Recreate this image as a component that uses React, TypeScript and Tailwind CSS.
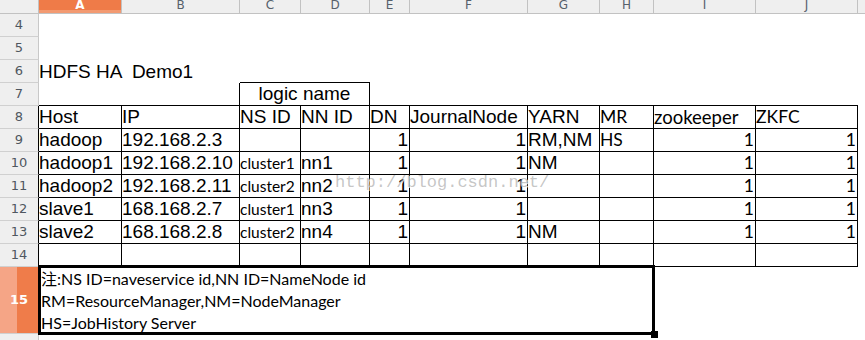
import React from "react";

const arial = "font-['Liberation_Sans',Arial,sans-serif]";
const cal = "font-['Lato','Noto_Sans_CJK_SC',sans-serif]";
const ui = "font-['DejaVu_Sans',sans-serif]";

type Col = { w: string; letter: string };

const columns: Col[] = [
  { w: "w-[83px]", letter: "A" },
  { w: "w-[118px]", letter: "B" },
  { w: "w-[61px]", letter: "C" },
  { w: "w-[69px]", letter: "D" },
  { w: "w-[40px]", letter: "E" },
  { w: "w-[118px]", letter: "F" },
  { w: "w-[72px]", letter: "G" },
  { w: "w-[54px]", letter: "H" },
  { w: "w-[102px]", letter: "I" },
  { w: "w-[102px]", letter: "J" },
];

function ColumnHeader() {
  return (
    <div className="flex h-[14px]">
      <div className="w-[39px] shrink-0 border-r border-b border-[#c2c2c2] bg-[#efefef]" />
      {columns.map((c) =>
        c.letter === "A" ? (
          <div
            key={c.letter}
            className={`${c.w} shrink-0 border-r border-b border-[#c2c2c2] bg-[linear-gradient(180deg,#ef7b48_0_10px,#f39a72_10px)] flex justify-center items-end`}
          >
            <span className={`${ui} text-[12px] leading-[12px] mb-[2px] text-white font-bold`}>A</span>
          </div>
        ) : (
          <div
            key={c.letter}
            className={`${c.w} shrink-0 border-r border-b border-[#c2c2c2] bg-[#efefef] flex justify-center items-end`}
          >
            <span className={`${ui} text-[12px] leading-[12px] mb-[2px] text-[#56606b]`}>{c.letter}</span>
          </div>
        )
      )}
      <div className="flex-1 border-b border-[#c2c2c2] bg-[#efefef]" />
    </div>
  );
}

function RowHead({ n, edge = "border-r-[#c8c8c8]", h = "h-[23px]" }: { n: number | string; edge?: string; h?: string }) {
  return (
    <div
      className={`w-[39px] ${h} shrink-0 border-r border-b border-b-[#d0d0d0] ${edge} bg-[#efefef] flex items-center justify-center`}
    >
      <span className={`${ui} text-[13px] text-[#4f5760]`}>{n}</span>
    </div>
  );
}

type CellSpec = { t?: string; right?: boolean; f?: "a" | "c" | "cs" | "cl" };

function Cell({ w, spec }: { w: string; spec: CellSpec }) {
  const font =
    spec.f === "c"
      ? `${cal} text-[17.5px]`
      : spec.f === "cl"
      ? `${cal} text-[18.5px]`
      : spec.f === "cs"
      ? `${cal} text-[15.5px]`
      : `${arial} text-[19px]`;
  return (
    <div
      className={`${w} shrink-0 border-r border-b border-black flex items-end overflow-hidden whitespace-nowrap ${
        spec.right ? "justify-end pr-[1px]" : "justify-start"
      }`}
    >
      <span className={`${font} leading-[22px] text-black`}>{spec.t ?? ""}</span>
    </div>
  );
}

const header: CellSpec[] = [
  { t: "Host" },
  { t: "IP" },
  { t: "NS ID" },
  { t: "NN ID" },
  { t: "DN" },
  { t: "JournalNode" },
  { t: "YARN" },
  { t: "MR", f: "c" },
  { t: "zookeeper", f: "cl" },
  { t: "ZKFC", f: "c" },
];

const one: CellSpec = { t: "1", right: true };
const oneC: CellSpec = { t: "1", right: true, f: "c" };

const data: CellSpec[][] = [
  [{ t: "hadoop" }, { t: "192.168.2.3" }, {}, {}, one, one, { t: "RM,NM" }, { t: "HS", f: "c" }, oneC, oneC],
  [{ t: "hadoop1" }, { t: "192.168.2.10" }, { t: "cluster1", f: "cs" }, { t: "nn1" }, one, one, { t: "NM" }, {}, oneC, oneC],
  [{ t: "hadoop2" }, { t: "192.168.2.11" }, { t: "cluster2", f: "cs" }, { t: "nn2" }, one, one, {}, {}, oneC, oneC],
  [{ t: "slave1" }, { t: "168.168.2.7" }, { t: "cluster1", f: "cs" }, { t: "nn3" }, one, one, {}, {}, oneC, oneC],
  [{ t: "slave2" }, { t: "168.168.2.8" }, { t: "cluster2", f: "cs" }, { t: "nn4" }, one, one, { t: "NM" }, {}, oneC, oneC],
  [{}, {}, {}, {}, {}, {}, {}, {}, {}, {}],
];

function TableRow({ n, cells }: { n: number; cells: CellSpec[] }) {
  return (
    <div className="flex h-[23px]">
      <RowHead n={n} edge="border-r-black" />
      {cells.map((s, i) => (
        <Cell key={i} w={columns[i].w} spec={s} />
      ))}
      <div className="flex-1" />
    </div>
  );
}

export default function App() {
  return (
    <div className="relative w-[865px] h-[340px] overflow-hidden bg-white">
      <ColumnHeader />

      <div className="flex h-[23px]">
        <RowHead n={4} />
        <div className="flex-1" />
      </div>
      <div className="flex h-[23px]">
        <RowHead n={5} />
        <div className="flex-1" />
      </div>

      {/* title row */}
      <div className="flex h-[23px]">
        <RowHead n={6} />
        <div className="w-[201px] shrink-0 flex items-end">
          <span className={`${arial} text-[19px] leading-[22px] whitespace-pre text-black`}>HDFS HA  Demo1</span>
        </div>
        <div className="w-[61px] shrink-0 border-b border-black" />
        <div className="w-[69px] shrink-0 border-b border-black" />
        <div className="flex-1" />
      </div>

      {/* merged "logic name" caption over NS ID / NN ID */}
      <div className="flex h-[23px]">
        <RowHead n={7} />
        <div className="w-[83px] shrink-0 border-b border-black" />
        <div className="w-[118px] shrink-0 border-b border-r border-black" />
        <div className="w-[130px] shrink-0 border-b border-r border-black flex items-end justify-center">
          <span className={`${arial} text-[19px] leading-[22px] text-black`}>logic name</span>
        </div>
        <div className="w-[488px] shrink-0 border-b border-black" />
        <div className="flex-1" />
      </div>

      <TableRow n={8} cells={header} />
      {data.map((r, i) => (
        <TableRow key={i} n={9 + i} cells={r} />
      ))}

      {/* notes row */}
      <div className="flex h-[67px]">
        <div className="w-[39px] h-[67px] shrink-0 border-r border-b border-r-black border-b-[#d0d0d0] bg-[linear-gradient(90deg,#f5a586_0_17px,#ef7c4a_17px)] flex items-center justify-center">
          <span className={`${ui} text-[13px] font-bold text-white`}>15</span>
        </div>
        <div className={`w-[615px] shrink-0 flex flex-col justify-end ${cal} text-[16px] leading-[22px] text-black pl-[2px]`}>
          <div>注:NS ID=naveservice id,NN ID=NameNode id</div>
          <div>RM=ResourceManager,NM=NodeManager</div>
          <div>HS=JobHistory Server</div>
        </div>
        <div className="flex-1" />
      </div>

      <div className="flex h-[23px]">
        <RowHead n={16} />
        <div className="flex-1" />
      </div>

      {/* cell cursor on A15 */}
      <div className="absolute left-[38px] top-[265px] w-[617px] h-[70px] border-[3px] border-black pointer-events-none" />
      <div className="absolute left-[651px] top-[331px] w-[7px] h-[7px] bg-black" />

      {/* blog watermark */}
      <div
        className="absolute left-[335px] top-[174px] font-['Liberation_Mono',monospace] text-[17px] leading-[17px] text-[rgba(150,150,150,0.55)] [text-shadow:1px_1px_0_rgba(255,255,255,0.8)] pointer-events-none whitespace-nowrap"
      >
        http://blog.csdn.net/
      </div>
    </div>
  );
}
